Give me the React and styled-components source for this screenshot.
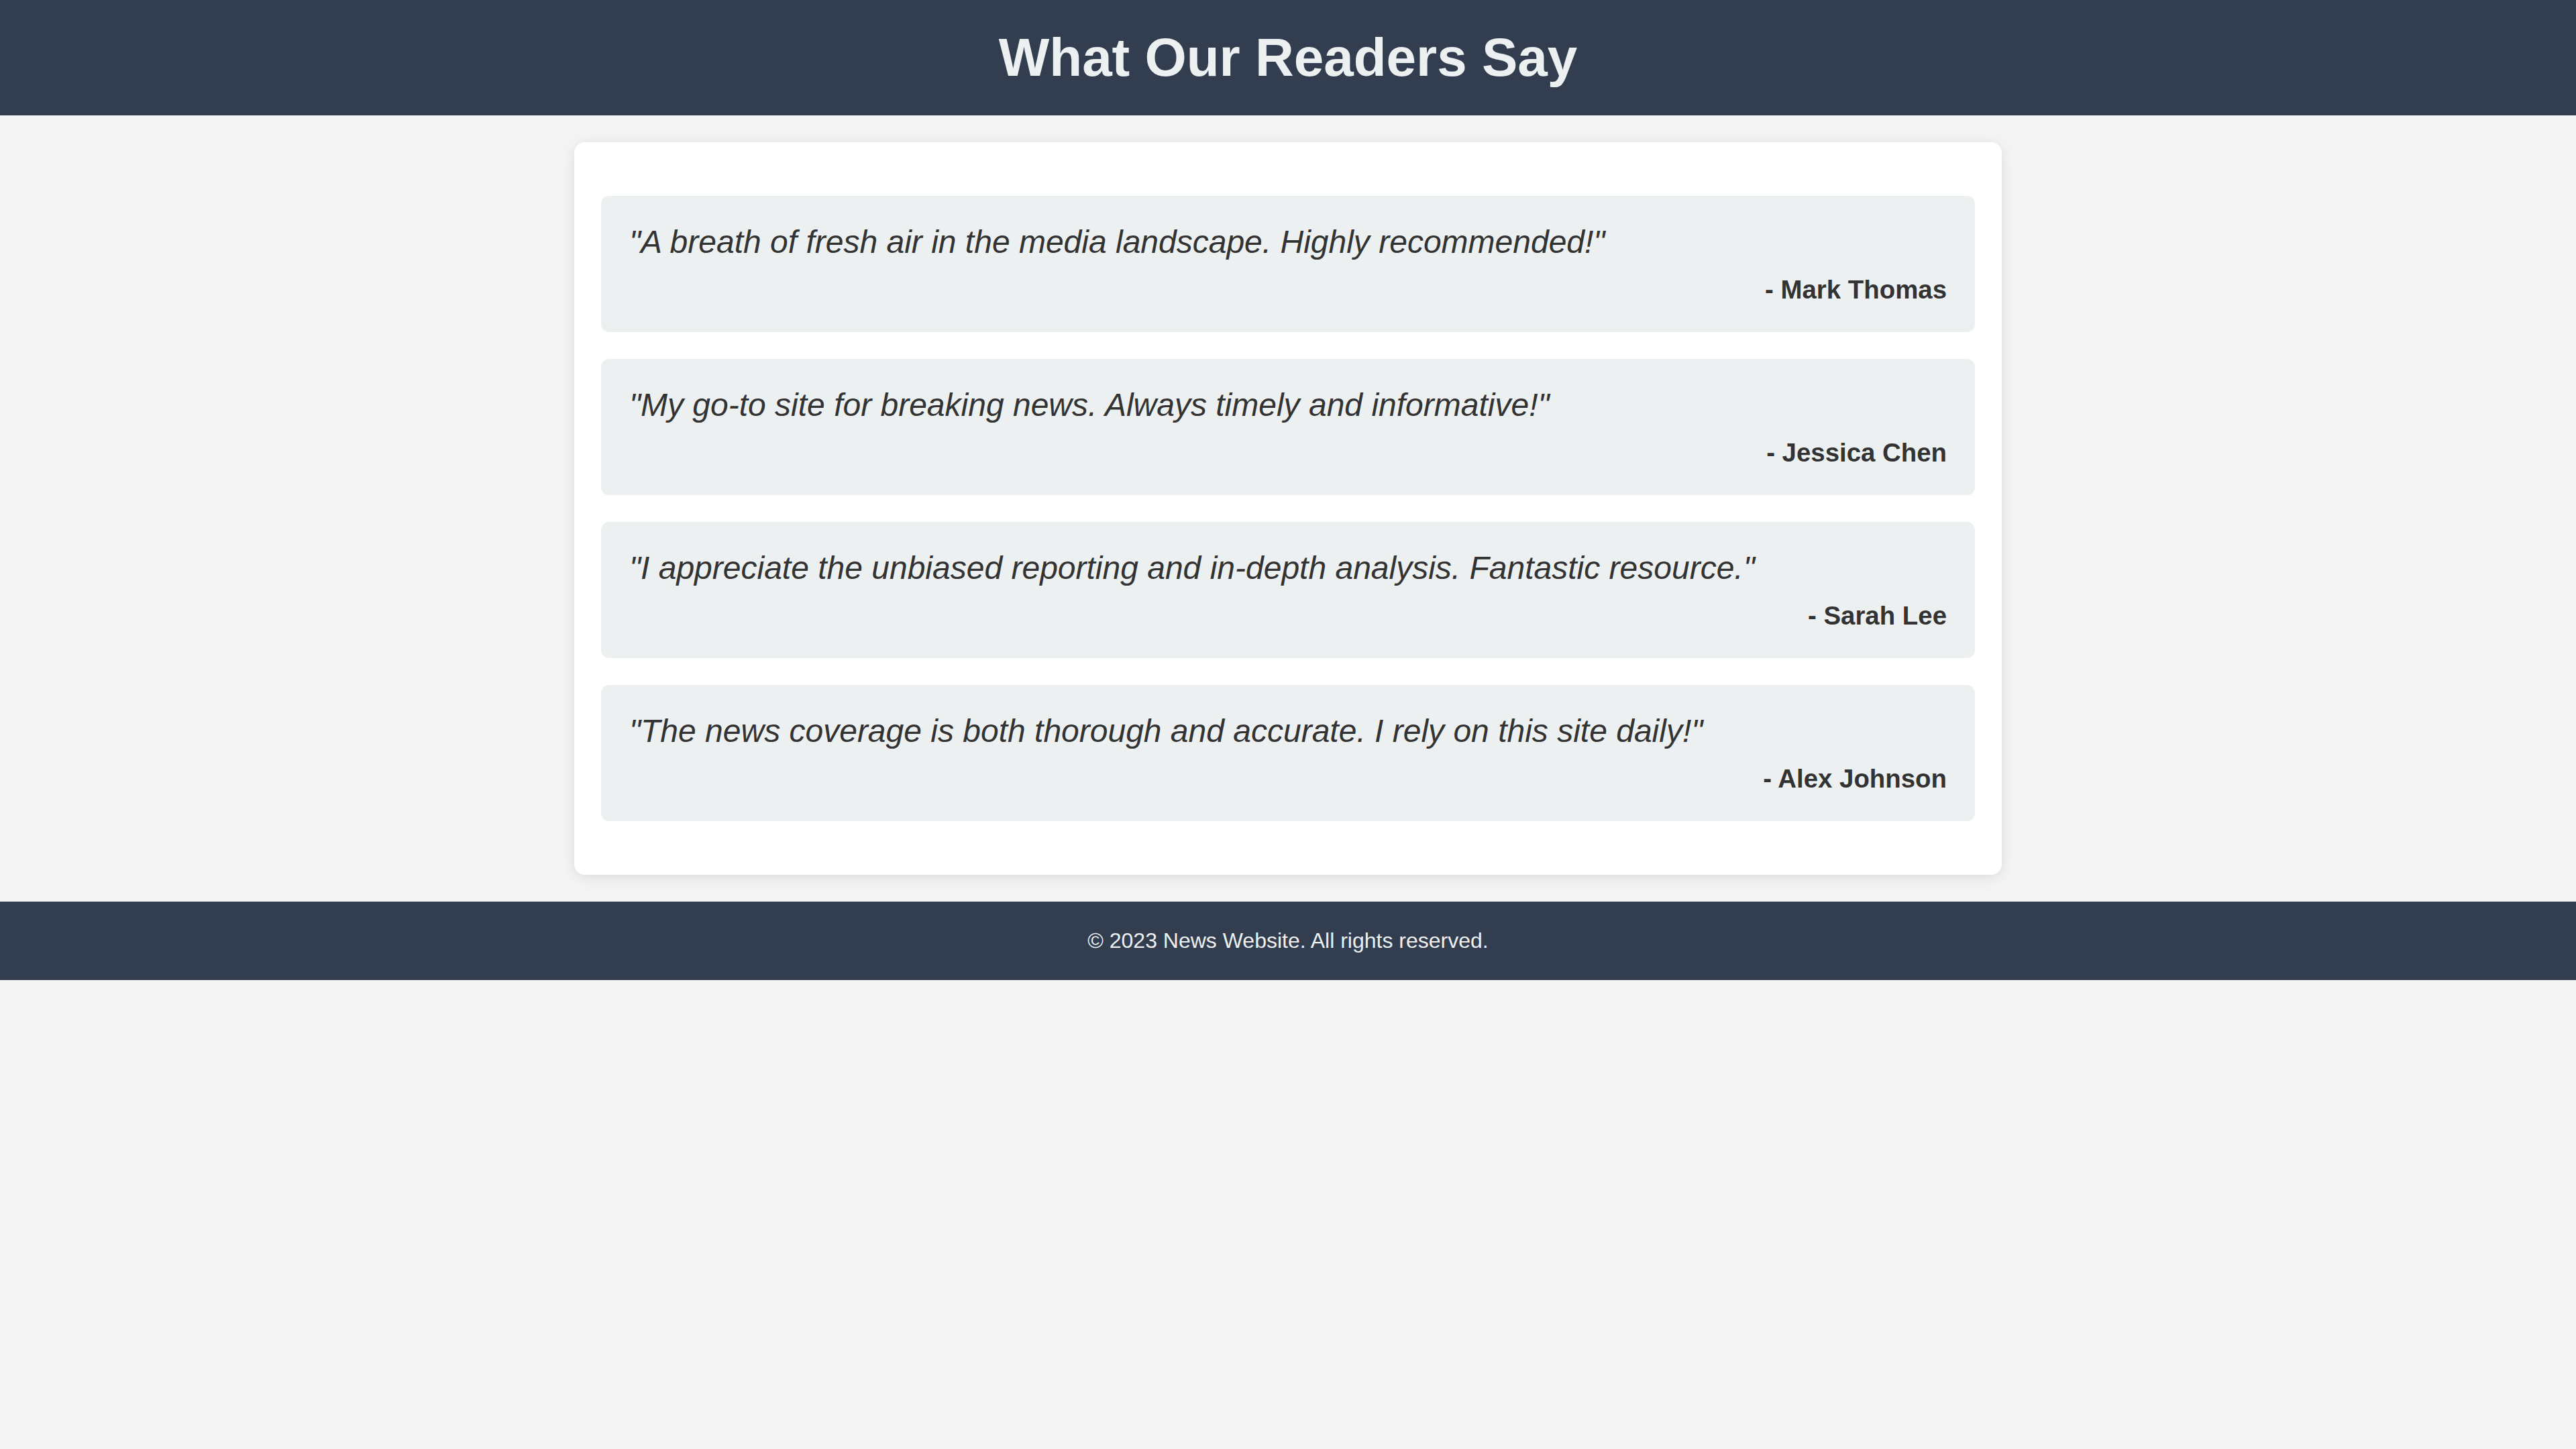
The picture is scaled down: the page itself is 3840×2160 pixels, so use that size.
import React from 'react';
import styled, { createGlobalStyle } from 'styled-components';

const GlobalStyle = createGlobalStyle`
    body {
        margin: 0;
        background-color: #f4f4f4;
        font-family: "Liberation Sans", Arial, Helvetica, sans-serif;
        color: #333333;
    }
`;

const Header = styled.header`
    background-color: #323e50;
    padding: 40px;
    text-align: center;
`;

const Title = styled.h1`
    margin: 0;
    font-size: 80px;
    font-weight: bold;
    color: #ecf0f1;
`;

const Main = styled.main`
    padding: 40px;
`;

const Card = styled.section`
    max-width: 2048px;
    margin: 0 auto;
    padding: 40px;
    background-color: #ffffff;
    border-radius: 16px;
    box-shadow: 0 4px 20px rgba(0, 0, 0, 0.1);
`;

const Testimonial = styled.div`
    background-color: #ecf0f1;
    padding: 41px 40px 41px 42px;
    margin: 40px 0;
    border-radius: 12px;
`;

const Quote = styled.p`
    margin: 0 0 22px;
    font-size: 48px;
    font-style: italic;
`;

const Author = styled.p`
    margin: 0;
    font-size: 38.4px;
    font-weight: bold;
    text-align: right;
    padding-right: 2px;
`;

const Footer = styled.footer`
    background-color: #323e50;
    color: #ecf0f1;
    text-align: center;
    padding: 40px;
    font-size: 32px;
`;

const testimonials = [
    { text: 'A breath of fresh air in the media landscape. Highly recommended!', author: 'Mark Thomas' },
    { text: 'My go-to site for breaking news. Always timely and informative!', author: 'Jessica Chen' },
    { text: 'I appreciate the unbiased reporting and in-depth analysis. Fantastic resource.', author: 'Sarah Lee' },
    { text: 'The news coverage is both thorough and accurate. I rely on this site daily!', author: 'Alex Johnson' },
];

const App = () => {
    return (
        <>
            <GlobalStyle />
            <Header>
                <Title>What Our Readers Say</Title>
            </Header>
            <Main>
                <Card>
                    {testimonials.map(item => (
                        <Testimonial key={item.author}>
                            <Quote>"{item.text}"</Quote>
                            <Author>- {item.author}</Author>
                        </Testimonial>
                    ))}
                </Card>
            </Main>
            <Footer>&copy; 2023 News Website. All rights reserved.</Footer>
        </>
    );
};

export default App;
